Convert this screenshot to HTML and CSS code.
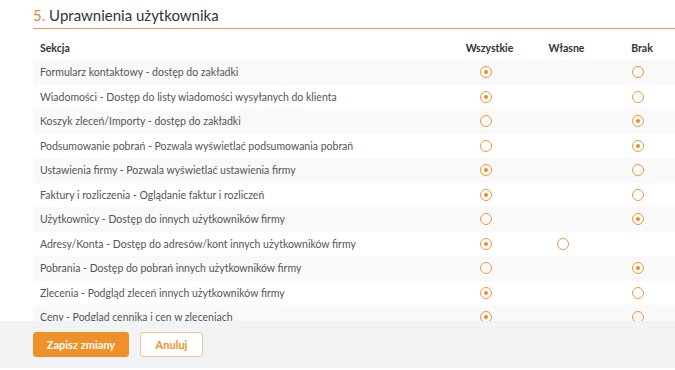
FILE: index.html
```html
<!DOCTYPE html>
<html>
  <head>
    <meta charset="utf-8" />
    <meta name="viewport" content="width=device-width, initial-scale=1.0" />
    <title>Uprawnienia użytkownika</title>
    <link rel="stylesheet" href="styles.css">
  </head>
  <body>
    <div class="section">
      <h2 class="section-title"><span class="num">5.</span> Uprawnienia użytkownika</h2>

      <div class="perm-table" id="perm-table">
        <div class="perm-row perm-head">
          <div class="cell-name">Sekcja</div>
          <div class="cell-opt">Wszystkie</div>
          <div class="cell-opt">Własne</div>
          <div class="cell-opt">Brak</div>
        </div>
      </div>
    </div>

    <div class="footer-bar">
      <button class="btn btn-primary">Zapisz zmiany</button>
      <button class="btn btn-outline">Anuluj</button>
    </div>

    <script>
      const table = document.getElementById('perm-table');

      // value: 0 = wszystkie, 1 = własne, 2 = brak; own = has "własne" option
      const rows = [
        ['Formularz kontaktowy - dostęp do zakładki', 0, false],
        ['Wiadomości - Dostęp do listy wiadomości wysyłanych do klienta', 0, false],
        ['Koszyk zleceń/Importy - dostęp do zakładki', 2, false],
        ['Podsumowanie pobrań - Pozwala wyświetlać podsumowania pobrań', 2, false],
        ['Ustawienia firmy - Pozwala wyświetlać ustawienia firmy', 0, false],
        ['Faktury i rozliczenia - Oglądanie faktur i rozliczeń', 0, false],
        ['Użytkownicy - Dostęp do innych użytkowników firmy', 2, false],
        ['Adresy/Konta - Dostęp do adresów/kont innych użytkowników firmy', 0, true, true],
        ['Pobrania - Dostęp do pobrań innych użytkowników firmy', 2, false],
        ['Zlecenia - Podgląd zleceń innych użytkowników firmy', 0, false],
        ['Ceny - Podgląd cennika i cen w zleceniach', 0, false]
      ];

      rows.forEach((r, i) => {
        const row = document.createElement('div');
        row.className = 'perm-row';

        const name = document.createElement('div');
        name.className = 'cell-name';
        name.textContent = r[0];
        row.appendChild(name);

        for (let c = 0; c < 3; c++) {
          const cell = document.createElement('div');
          cell.className = 'cell-opt';
          const show = c === 1 ? r[2] : !(c === 2 && r[3]);
          if (show) {
            const radio = document.createElement('span');
            radio.className = 'radio' + (r[1] === c ? ' checked' : '');
            cell.appendChild(radio);
          }
          row.appendChild(cell);
        }
        table.appendChild(row);
      });
    </script>
  </body>
</html>
```

FILE: styles.css
```css
html,
body {
  margin: 0;
  padding: 0;
  height: 100%;
  overflow: hidden;
}

body {
  background: #fff;
  font-family: Lato, "Open Sans", sans-serif;
  color: #555;
}

.section {
  padding: 7px 0 0 33px;
}

.section-title {
  margin: 0;
  padding-bottom: 4px;
  font-size: 15px;
  font-weight: 400;
  color: #333;
  line-height: 17px;
  border-bottom: 1px solid #ec9a6a;
}

.section-title .num {
  color: #e8873a;
}

.perm-table {
  margin-top: 6px;
}

.perm-row {
  display: grid;
  grid-template-columns: 1fr 77px 77px 74px;
  align-items: center;
  height: 24.5px;
  font-size: 10.5px;
}

.perm-row:nth-child(even) {
  background: #f9f9f9;
}

.perm-head {
  height: 25px;
  font-weight: 700;
  color: #333;
}

.perm-head .cell-opt {
  padding-left: 8px;
}

.cell-name {
  padding-left: 7px;
  white-space: nowrap;
}

.cell-opt {
  display: flex;
  justify-content: center;
  align-items: center;
}

.radio {
  width: 10px;
  height: 10px;
  border: 1.5px solid #f09a42;
  border-radius: 50%;
  display: flex;
  justify-content: center;
  align-items: center;
}

.radio.checked::after {
  content: '';
  width: 4px;
  height: 4px;
  border-radius: 50%;
  background: #ee8a2a;
}

.footer-bar {
  position: fixed;
  left: 0;
  right: 0;
  bottom: 2px;
  height: 47px;
  background: #f2f3f5;
  display: flex;
  align-items: center;
  gap: 11px;
  padding-left: 33px;
}

.btn {
  height: 25px;
  border-radius: 3px;
  font-family: Lato, sans-serif;
  font-size: 11px;
  font-weight: 700;
  cursor: pointer;
}

.btn-primary {
  width: 96px;
  background: #ef9128;
  border: 1px solid #ef9128;
  color: #fff;
}

.btn-outline {
  width: 63px;
  background: #fff;
  border: 1px solid #f6c494;
  color: #ef9128;
}
```
